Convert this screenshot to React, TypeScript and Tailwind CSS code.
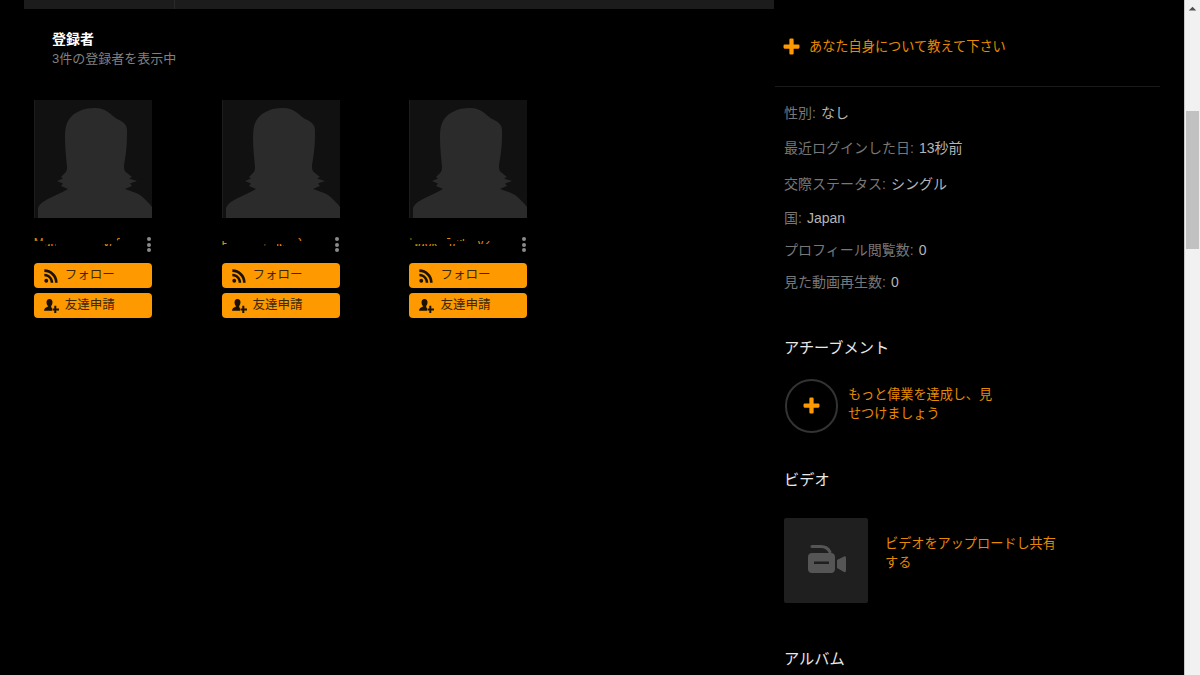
const cjk = "font-['Liberation_Sans','Noto_Sans_CJK_JP',sans-serif]";

function Silhouette() {
  return (
    <svg viewBox="0 0 118 118" className="block h-[118px] w-[118px] bg-[#111111]">
      <rect x="0" y="0" width="1" height="118" fill="#1d1d1d" />
      <path
        d="M4 118V108C6 103 10 101 16 98C22 95 29 92 34 89L27 86L29 83.500L23 81L29 78.500L27 77L31 73C33 71 33 69 33 67C32 57 31 47 31 38C31 29 32 23 36 18C40 13 48 8 61 8C67 8 71 10 74 12C78 15 80 17 83 19C88 21 93 24 93 30C93 38 93 44 92 52C91 60 90 64 90 67C90 70 91 72 93 73L98 77L95 78.500L103 81L96 83.500L98 86L91 89C96 91 101 92 106 95C110 98 115 103 118 107V118Z"
        fill="#2b2b2b"
      />
    </svg>
  );
}

function RssIcon() {
  return (
    <svg viewBox="0 0 16 16" className="h-[14px] w-[14px]" fill="#1a1204">
      <circle cx="2.6" cy="13.4" r="2.2" />
      <path d="M.4 5.4v3c3.9 0 7.2 3.2 7.2 7.2h3C10.6 10 6 5.4.4 5.4Z" />
      <path d="M.4.4v3c6.7 0 12.2 5.5 12.2 12.2h3C15.600 7.200 8.800.4.400.4Z" />
    </svg>
  );
}

function AddUserIcon() {
  return (
    <svg viewBox="0 0 15 14" className="h-[14px] w-[15px]" fill="#1a1204">
      <path d="M5.500 0C3.500 0 2.500 1.400 2.500 3.200C2.500 4.600 3 6 3.800 6.800V7.800C2 8.600 0 9.300 0 11.800H8V9.200C7.500 8.600 7.200 8.200 7.200 7.800V6.800C8 6 8.500 4.600 8.500 3.200C8.500 1.400 7.500 0 5.500 0Z" />
      <path d="M10.300 6.800H12.300V9.400H15V11.400H12.300V14H10.300V11.400H8.500V9.400H10.300Z" />
    </svg>
  );
}

function Card({ name, clip }: { name: string; clip: string }) {
  return (
    <div className="w-[118px]">
      <Silhouette />
      <div className="mt-[19px] flex h-[15px] items-start justify-between">
        <span className={`h-[11px] w-[100px] overflow-hidden whitespace-nowrap text-[12px] leading-[13px] text-[#e68a00] ${clip}`}>
          {name}
        </span>
        <div className="mr-[1px] flex flex-col gap-[1.5px]">
          <i className="block h-[4px] w-[4px] rounded-full bg-[#8a8a8a]" />
          <i className="block h-[4px] w-[4px] rounded-full bg-[#8a8a8a]" />
          <i className="block h-[4px] w-[4px] rounded-full bg-[#8a8a8a]" />
        </div>
      </div>
      <button className="mt-[11px] flex h-[25px] w-full items-center rounded-[4px] bg-[#ff9900] pl-[10px] text-[12.5px] text-[#3a2804]">
        <RssIcon />
        <span className="ml-[7px]">フォロー</span>
      </button>
      <button className="mt-[5px] flex h-[25px] w-full items-center rounded-[4px] bg-[#ff9900] pl-[10px] text-[12.5px] text-[#3a2804]">
        <AddUserIcon />
        <span className="ml-[6px]">友達申請</span>
      </button>
    </div>
  );
}

function Info({ label, value, cls }: { label: string; value: string; cls: string }) {
  return (
    <div className={`flex items-start text-[14px] leading-[20px] ${cls}`}>
      <span className="text-[#777777]">{label}:</span>
      <span className="ml-[5px] text-[#b5b5b5]">{value}</span>
    </div>
  );
}

function Plus({ size }: { size: number }) {
  return (
    <svg viewBox="0 0 16 16" width={size} height={size} fill="#ff9900">
      <path d="M6 1.500Q6 .5 7 .5H9Q10 .5 10 1.500V6H14.500Q15.500 6 15.500 7V9Q15.500 10 14.500 10H10V14.500Q10 15.500 9 15.500H7Q6 15.500 6 14.500V10H1.500Q.5 10 .5 9V7Q.5 6 1.500 6H6Z" />
    </svg>
  );
}

export default function App() {
  return (
    <div className={`flex h-[675px] w-[1200px] overflow-hidden bg-black ${cjk}`}>
      <main className="w-[775px] shrink-0 pl-[24px]">
        <div className="flex h-[9px] w-[750px] bg-[#1c1c1c]">
          <div className="w-[151px] border-r border-[#2a2a2a]" />
        </div>
        <div className="pl-[28px] pt-[20px]">
          <h2 className="text-[14px] font-bold leading-[20px] text-white">登録者</h2>
          <p className="text-[13px] leading-[20px] text-[#808080]">3件の登録者を表示中</p>
        </div>
        <div className="ml-[9.8px] mt-[31px] flex gap-[69.8px]">
          <Card name="Marty_ynagoya3" clip="[clip-path:path('M0_1H9V4H0ZM12_7H22V9H12ZM69_7H78V9H69ZM83_1H86V4H83Z')]" />
          <Card name="Piyotaro_hp_i2" clip="[clip-path:path('M0_4H5V8H0ZM43_7H47V9H43ZM55_7H62V9H55ZM77_1H82V4H77Z')]" />
          <Card name="Naoki_Taiki_y21" clip="[clip-path:path('M0_1H2V3H0ZM6_7H28V9H6ZM34_0H41V2H34ZM39_7H46V9H39ZM48_2H56V4H48ZM68_4H81V7H68Z')]" />
        </div>
      </main>
      <aside className="w-[385px] shrink-0">
        <div className="flex h-[87px] items-start border-b border-[#1a1a1a] pl-[8px] pt-[38px]">
          <Plus size={17} />
          <span className="ml-[9px] text-[13.2px] leading-[18px] text-[#e68a00]">あなた自身について教えて下さい</span>
        </div>
        <div className="pl-[9px] pt-[16px]">
          <Info label="性別" value="なし" cls="" />
          <Info label="最近ログインした日" value="13秒前" cls="mt-[15px]" />
          <Info label="交際ステータス" value="シングル" cls="mt-[15.5px]" />
          <Info label="国" value="Japan" cls="mt-[14px]" />
          <Info label="プロフィール閲覧数" value="0" cls="mt-[12px]" />
          <Info label="見た動画再生数" value="0" cls="mt-[12px]" />
          <h3 className="mt-[46px] text-[15.2px] leading-[20px] text-[#e8e8e8]">アチーブメント</h3>
          <div className="mt-[21px] flex items-center">
            <div className="ml-[1px] flex h-[54px] w-[53px] items-center justify-center rounded-full border-2 border-[#333333]">
              <Plus size={17} />
            </div>
            <p className="-mt-[3px] ml-[10px] w-[150px] text-[13.1px] leading-[19px] text-[#e68a00]">もっと偉業を達成し、見せつけましょう</p>
          </div>
          <h3 className="mt-[37px] text-[15.2px] leading-[20px] text-[#e8e8e8]">ビデオ</h3>
          <div className="mt-[28px] flex items-center">
            <div className="flex h-[85px] w-[84px] items-center justify-center rounded-[2px] bg-[#1f1f1f]">
              <svg viewBox="0 0 38 28" className="mb-[2px] ml-[1px] h-[28px] w-[38px]" fill="#555555">
                <path d="M4 1.500H13C17 1.500 20 3 22 7" fill="none" stroke="#555555" strokeWidth="3" strokeLinecap="round" />
                <path fillRule="evenodd" d="M4 8H23C25.500 8 27 9.500 27 12V24C27 26.500 25.500 28 23 28H4C1.500 28 0 26.500 0 24V12C0 9.500 1.500 8 4 8ZM6 16.500V19H21V16.500Z" />
                <path d="M29 15L36 11.500Q38 10.500 38 13V25Q38 28 36 27L29 23Z" />
              </svg>
            </div>
            <p className="-mt-[14px] ml-[17px] w-[175px] text-[13.15px] leading-[19px] text-[#e68a00]">ビデオをアップロードし共有する</p>
          </div>
          <h3 className="mt-[46px] text-[15.2px] leading-[20px] text-[#e8e8e8]">アルバム</h3>
        </div>
      </aside>
      <div className="ml-[24px] flex w-[16px] flex-col border-l border-[#c8c8c8] bg-[#f1f1f1]">
        <svg viewBox="0 0 16 16" className="h-[17px] w-[15px]"><path d="M4 10L8 6L12 10Z" fill="#505050" /></svg>
        <div className="ml-[1px] mt-[94px] h-[138px] w-[13px] bg-[#c1c1c1]" />
      </div>
    </div>
  );
}
